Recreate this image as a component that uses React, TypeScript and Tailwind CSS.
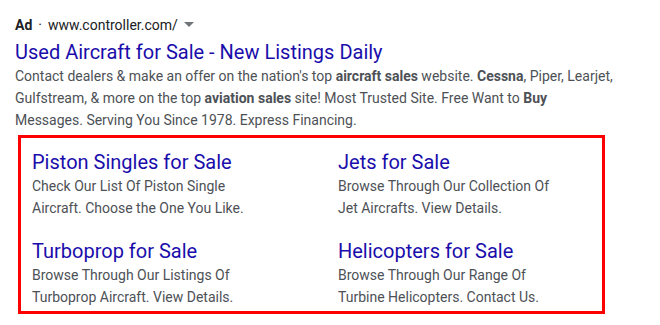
import React from "react";

const links = [
  { t: "Piston Singles for Sale", d1: "Check Our List Of Piston Single", d2: "Aircraft. Choose the One You Like." },
  { t: "Jets for Sale", d1: "Browse Through Our Collection Of", d2: "Jet Aircrafts. View Details." },
  { t: "Turboprop for Sale", d1: "Browse Through Our Listings Of", d2: "Turboprop Aircraft. View Details." },
  { t: "Helicopters for Sale", d1: "Browse Through Our Range Of", d2: "Turbine Helicopters. Contact Us." },
];

export default function App() {
  return (
    <div className="w-[660px] h-[325px] bg-white overflow-hidden pl-[15px] pt-[15px]" style={{ fontFamily: "Roboto, 'Liberation Sans', sans-serif" }}>
      <div className="flex items-center h-[20px] text-[14px] leading-[20px] text-[#202124]">
        <span className="font-bold">Ad</span>
        <span className="mx-[6px]">·</span>
        <span>www.controller.com/</span>
        <svg className="ml-[6px]" width="10" height="6" viewBox="0 0 10 6"><path d="M0 0h10L5 5z" fill="#70757a" /></svg>
      </div>
      <div className="mt-[4px] text-[20px] leading-[26px] text-[#1a0dab]">Used Aircraft for Sale - New Listings Daily</div>
      <div className="text-[14px] leading-[22px] text-[#4d5156] w-[600px]">
        Contact dealers &amp; make an offer on the nation's top <b>aircraft sales</b> website. <b>Cessna</b>, Piper, Learjet, Gulfstream, &amp; more on the top <b>aviation sales</b> site! Most Trusted Site. Free Want to <b>Buy</b> Messages. Serving You Since 1978. Express Financing.
      </div>
      <div className="mt-[4px] ml-[3px] w-[587px] h-[179px] border-[3px] border-[#ff0000] grid grid-cols-[306px_1fr] content-start gap-y-[19px] pl-[11px] pt-[11px]">
        {links.map((l) => (
          <div key={l.t}>
            <div className="text-[20px] leading-[26px] text-[#1a0dab]">{l.t}</div>
            <div className="text-[14px] leading-[22px] text-[#4d5156]">{l.d1}</div>
            <div className="text-[14px] leading-[22px] text-[#4d5156]">{l.d2}</div>
          </div>
        ))}
      </div>
    </div>
  );
}
